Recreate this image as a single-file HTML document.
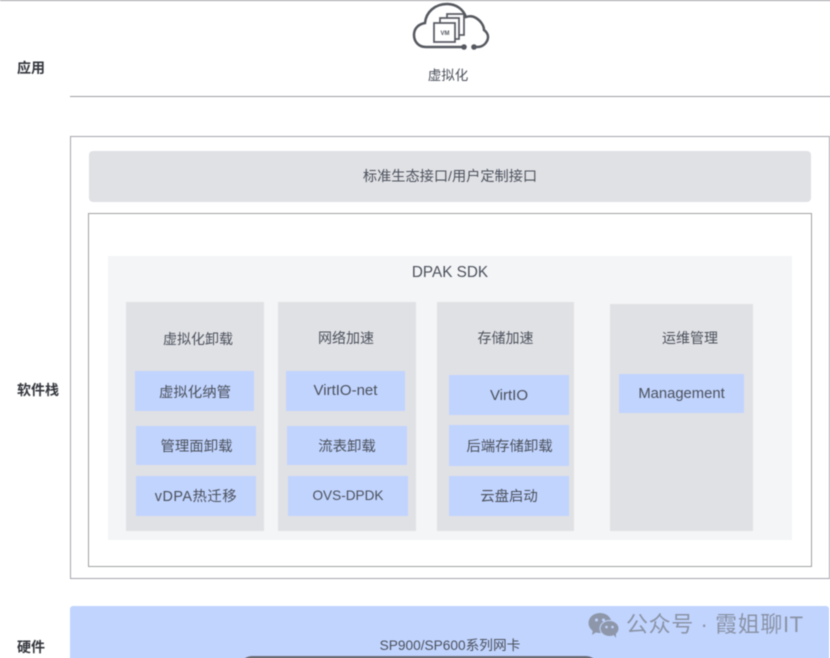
<!DOCTYPE html>
<html lang="zh-CN">
<head>
<meta charset="utf-8">
<title>DPAK SDK</title>
<style>
html,body{margin:0;padding:0;background:#fff;width:830px;height:658px;overflow:hidden}
#p{position:relative;width:840px;height:668px;overflow:hidden;background:#fff;font-family:"Liberation Sans","Noto Sans CJK SC",sans-serif;color:#4b505b;filter:blur(.5px)}
#p div{position:absolute;box-sizing:border-box}
.t{text-align:center;white-space:nowrap;font-size:14px;line-height:20px;height:20px}
.l{font-size:14px;font-weight:700;color:#33363d;left:17px;line-height:18px;white-space:nowrap}
.c{background:#e0e1e5}
.b{background:#c1d4fe;display:flex;align-items:center;justify-content:center;font-size:14.400px;white-space:nowrap;color:#4b505b}
</style>
</head>
<body>
<div id="p">
<div style="left:0;top:0;width:840px;height:1px;background:#9d9ea3"></div>
<svg style="position:absolute;left:410px;top:0" width="82" height="54" viewBox="0 0 82 54" fill="none" stroke="#55585f" stroke-width="2.500">
<path d="M53 47H16C8 47 4 41 4 35C4 28 9 24 15 23C16 12 25 4 37 4C46 4 53 9 56 17C59 16 63 16 66 18C71 21 74 26 74 30C78 33 79 37 77 41C75 45 71 47 67 47H64"/>
<circle cx="54" cy="47" r="2.800" fill="#55585f" stroke="none"/>
<circle cx="64" cy="47" r="2.800" fill="#55585f" stroke="none"/>
<g stroke-width="1.700" fill="#fff">
<rect x="37" y="14" width="17" height="21"/>
<rect x="30" y="18" width="19" height="21"/>
<rect x="24" y="23" width="21" height="19"/>
</g>
<text x="35" y="35" font-size="6" font-weight="700" text-anchor="middle" fill="#55585f" stroke="none" font-family="Liberation Sans,sans-serif">VM</text>
</svg>
<div class="t" style="left:398px;top:66px;width:100px;font-size:13.500px">虚拟化</div>
<div class="l" style="top:59px">应用</div>
<div style="left:70px;top:96px;width:770px;height:1px;background:#9d9ea3"></div>
<div class="l" style="top:381px">软件栈</div>
<div class="l" style="top:638px">硬件</div>

<div style="left:70px;top:136px;width:760px;height:443px;border:1px solid #a5a6ab"></div>
<div style="left:89px;top:151px;width:722px;height:51px;background:#e0e1e5;border-radius:4px"></div>
<div class="t" style="left:89px;top:167px;width:722px;font-size:14.200px">标准生态接口/用户定制接口</div>
<div style="left:88px;top:213px;width:724px;height:354px;border:1px solid #a0a1a6"></div>
<div style="left:108px;top:256px;width:684px;height:284px;background:#f4f5f7"></div>
<div class="t" style="left:350px;top:263px;width:200px;font-size:15.300px">DPAK SDK</div>

<div class="c" style="left:126px;top:302px;width:138px;height:229px"></div>
<div class="c" style="left:278px;top:302px;width:138px;height:229px"></div>
<div class="c" style="left:437px;top:302px;width:137px;height:229px"></div>
<div class="c" style="left:610px;top:304px;width:143px;height:227px"></div>

<div class="t" style="left:126px;top:329px;width:144px">虚拟化卸载</div>
<div class="t" style="left:278px;top:328px;width:136px">网络加速</div>
<div class="t" style="left:437px;top:328px;width:137px">存储加速</div>
<div class="t" style="left:620px;top:328px;width:140px">运维管理</div>

<div class="b" style="left:135px;top:371px;width:119px;height:40px;padding-left:1px">虚拟化纳管</div>
<div class="b" style="left:136px;top:426px;width:120px;height:39px;padding-left:1px">管理面卸载</div>
<div class="b" style="left:136px;top:476px;width:120px;height:40px;padding-bottom:1px;letter-spacing:.5px">vDPA热迁移</div>

<div class="b" style="left:286px;top:371px;width:119px;height:40px;padding-bottom:2px;font-size:15px">VirtIO-net</div>
<div class="b" style="left:287px;top:426px;width:120px;height:39px">流表卸载</div>
<div class="b" style="left:288px;top:476px;width:120px;height:40px;font-size:13.600px;padding-bottom:1px">OVS-DPDK</div>

<div class="b" style="left:449px;top:375px;width:120px;height:40px;font-size:15px">VirtIO</div>
<div class="b" style="left:449px;top:425px;width:120px;height:41px;padding-left:1px">后端存储卸载</div>
<div class="b" style="left:449px;top:476px;width:120px;height:40px;padding-bottom:2px">云盘启动</div>

<div class="b" style="left:619px;top:374px;width:125px;height:39px;font-size:14.800px">Management</div>

<div style="left:70px;top:606px;width:759px;height:70px;background:#c1d4fe;border-radius:3px 3px 0 0"></div>
<div class="t" style="left:350px;top:636px;width:200px;font-size:13.700px">SP900/SP600系列网卡</div>
<div style="left:240px;top:656px;width:358px;height:20px;background:#696c75;border-radius:12px 12px 0 0"></div>

<svg style="position:absolute;left:588px;top:612px" width="32" height="26" viewBox="0 0 32 26">
<ellipse cx="12" cy="11" rx="11.500" ry="10" fill="#8e97aa"/>
<path d="M5 17L4 23L10 19Z" fill="#8e97aa"/>
<circle cx="8.500" cy="8" r="1.500" fill="#c1d4fe"/><circle cx="15.500" cy="8" r="1.500" fill="#c1d4fe"/>
<ellipse cx="21.500" cy="16.500" rx="9.500" ry="8" fill="#8e97aa" stroke="#c1d4fe" stroke-width="1"/>
<path d="M25 22L28 26L28 20Z" fill="#8e97aa"/>
<circle cx="18.500" cy="15" r="1.300" fill="#c1d4fe"/><circle cx="24.500" cy="15" r="1.300" fill="#c1d4fe"/>
</svg>
<div style="left:626px;top:611px;font-size:22px;line-height:28px;color:#8a93a6;white-space:nowrap;letter-spacing:.6px">公众号 · 霞姐聊IT</div>
</div>
</body>
</html>
